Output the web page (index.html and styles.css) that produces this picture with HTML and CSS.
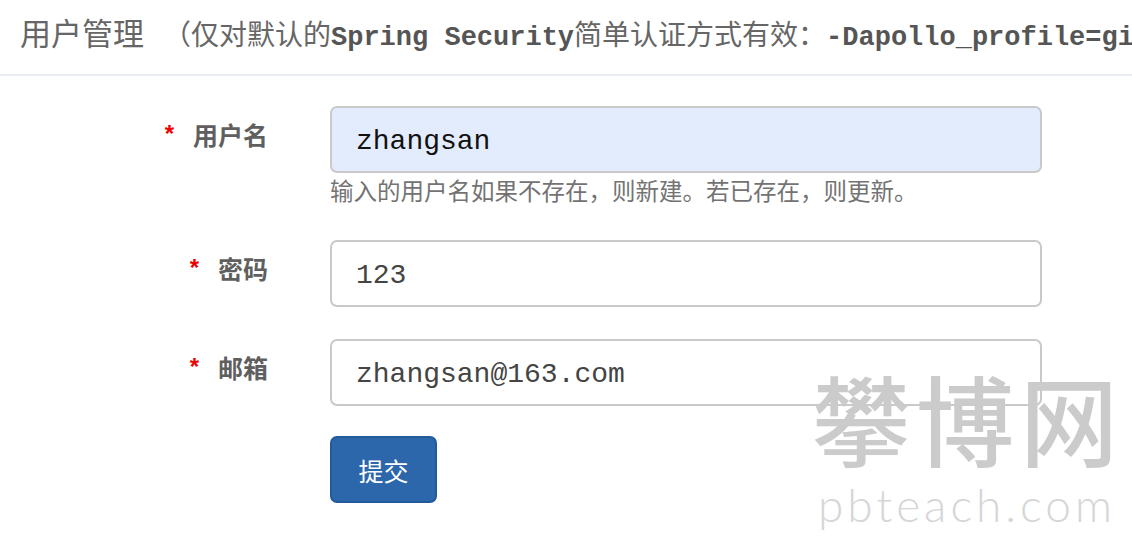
FILE: index.html
```html
<!DOCTYPE html>
<html lang="zh-CN">
<head>
<meta charset="utf-8">
<title>用户管理</title>
<link rel="stylesheet" href="styles.css">
</head>
<body>
<div class="page">
  <header class="page-header">
    <h1 class="title">用户管理<small class="subtitle">（仅对默认的<code class="mono">Spring Security</code>简单认证方式有效：<code class="mono">-Dapollo_profile=github,auth</code>）</small></h1>
  </header>
  <form class="form">
    <div class="row">
      <label class="label"><span class="req">*</span>用户名</label>
      <div class="field">
        <input class="input autofill" type="text" value="zhangsan">
        <p class="help">输入的用户名如果不存在，则新建。若已存在，则更新。</p>
      </div>
    </div>
    <div class="row">
      <label class="label"><span class="req">*</span>密码</label>
      <div class="field">
        <input class="input" type="text" value="123">
      </div>
    </div>
    <div class="row">
      <label class="label"><span class="req">*</span>邮箱</label>
      <div class="field">
        <input class="input" type="text" value="zhangsan@163.com">
      </div>
    </div>
    <div class="row row-actions">
      <div class="label"></div>
      <div class="field">
        <button class="btn" type="button">提交</button>
      </div>
    </div>
  </form>
  <div class="watermark">
    <div class="wm-cn">攀博网</div>
    <div class="wm-en">pbteach.com</div>
  </div>
</div>
</body>
</html>
```

FILE: styles.css
```css
html, body {
  margin: 0;
  padding: 0;
  background: #fff;
}
body {
  font-family: "Noto Sans CJK SC", "Liberation Sans", sans-serif;
  color: #555;
  width: 1132px;
  height: 546px;
  overflow: hidden;
}
.page {
  position: relative;
  width: 1132px;
  height: 546px;
  overflow: hidden;
}
.page-header {
  height: 74px;
  border-bottom: 2px solid #e8edf3;
  overflow: hidden;
  white-space: nowrap;
}
.title {
  margin: 0;
  padding: 10px 0 0 20px;
  font-size: 31px;
  line-height: 44px;
  font-weight: 400;
  color: #666;
}
.subtitle {
  margin-left: 19px;
  font-size: 28px;
  color: #666;
}
.mono {
  font-family: "Liberation Mono", monospace;
  font-weight: bold;
  font-size: 27px;
  color: #555;
}
.form {
  padding-top: 30px;
}
.row {
  display: flex;
  gap: 62px;
  margin-bottom: 32px;
}
.row-actions {
  margin-top: -2px;
}
.label {
  width: 268px;
  display: flex;
  justify-content: flex-end;
  align-items: flex-start;
  padding-top: 11px;
  font-size: 25px;
  line-height: 34px;
  font-weight: bold;
  color: #5f5f5f;
}
.req {
  color: #e00;
  font-family: "Liberation Sans", sans-serif;
  font-size: 24px;
  margin-right: 19px;
}
.field {
  display: flex;
  flex-direction: column;
}
.input {
  box-sizing: border-box;
  width: 712px;
  height: 67px;
  margin: 0;
  padding: 3px 24px 0;
  border: 2px solid #c9c9c9;
  border-radius: 7px;
  background: #fff;
  font-family: "Liberation Mono", monospace;
  font-size: 28px;
  color: #444;
  outline: none;
}
.input.autofill {
  background: #e3ecfd;
  color: #111;
}
.help {
  margin: 0;
  font-size: 23.5px;
  line-height: 35px;
  color: #737373;
}
.btn {
  box-sizing: border-box;
  width: 107px;
  height: 67px;
  margin: 0;
  padding: 0;
  border: 2px solid #245a9a;
  border-radius: 7px;
  background: #2c66ab;
  color: #fff;
  font-family: "Noto Sans CJK SC", sans-serif;
  font-size: 25px;
}
.watermark {
  position: absolute;
  left: 812px;
  top: 366px;
  pointer-events: none;
  color: #cbcbcb;
}
.wm-cn {
  font-family: "Noto Sans CJK SC", sans-serif;
  font-weight: 500;
  font-size: 98px;
  line-height: 100px;
  letter-spacing: 6px;
}
.wm-en {
  margin-top: 12px;
  padding-left: 6px;
  font-family: "Lato", "Open Sans", sans-serif;
  font-weight: 300;
  font-size: 46px;
  line-height: 54px;
  letter-spacing: 4px;
  color: #d6d6d6;
}
```
